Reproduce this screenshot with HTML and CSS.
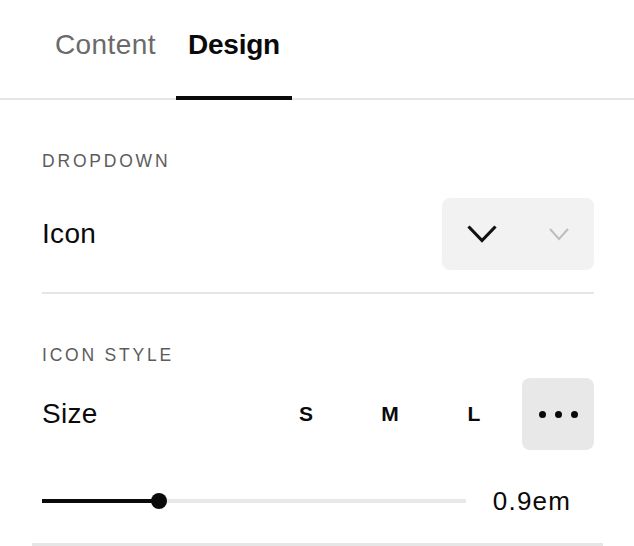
FILE: index.html
```html
<!DOCTYPE html>
<html>
<head>
<meta charset="utf-8">
<link rel="stylesheet" href="styles.css">
</head>
<body>
<div class="panel">
  <div class="tabs">
    <div class="tab">Content</div>
    <div class="tab active">Design</div>
  </div>
  <div class="body">
    <div class="label label-first">DROPDOWN</div>
    <div class="row row-dropdown">
      <div class="row-title">Icon</div>
      <div class="picker">
        <div class="picker-cell">
          <svg width="30" height="18" viewBox="0 0 30 18"><polyline points="1.5,1.5 15,15.5 28.5,1.5" fill="none" stroke="#111" stroke-width="3.2"/></svg>
        </div>
        <div class="picker-cell picker-cell-alt">
          <svg width="20" height="13" viewBox="0 0 20 13"><polyline points="1,1 10,11 19,1" fill="none" stroke="#bdbdbd" stroke-width="2"/></svg>
        </div>
      </div>
    </div>
    <div class="divider"></div>
    <div class="label label-second">ICON STYLE</div>
    <div class="row row-size">
      <div class="row-title">Size</div>
      <div class="sizes">
        <div class="size-btn">S</div>
        <div class="size-btn">M</div>
        <div class="size-btn">L</div>
        <div class="size-btn selected">
          <span class="dot"></span><span class="dot"></span><span class="dot"></span>
        </div>
      </div>
    </div>
    <div class="slider-row">
      <div class="track">
        <div class="fill" style="width: 117px"></div>
        <div class="knob" style="left: 117px"></div>
      </div>
      <div class="value">0.9em</div>
    </div>
    <div class="divider divider-wide"></div>
  </div>
</div>
</body>
</html>
```
FILE: styles.css
```css
html, body {
  margin: 0;
  padding: 0;
  background: #fff;
}
body {
  font-family: "Liberation Sans", Arial, sans-serif;
  color: #0a0a0a;
  width: 634px;
  height: 546px;
  overflow: hidden;
}
.tabs {
  display: flex;
  gap: 8px;
  height: 100px;
  box-sizing: border-box;
  padding-left: 43px;
  border-bottom: 2px solid #e6e6e6;
}
.tab {
  font-size: 28px;
  line-height: 32px;
  padding: 29px 12px 0;
  margin-bottom: -2px;
  border-bottom: 4px solid transparent;
  color: #6a6a6a;
  letter-spacing: 0.4px;
}
.tab.active {
  color: #0a0a0a;
  font-weight: bold;
  border-bottom-color: #0a0a0a;
  letter-spacing: -0.2px;
}
.body {
  padding: 0 40px 0 42px;
}
.label {
  font-size: 17.5px;
  line-height: 20px;
  letter-spacing: 2.8px;
  color: #5c5c5c;
}
.label-first {
  margin-top: 51px;
}
.label-second {
  margin-top: 51px;
}
.row {
  display: flex;
  align-items: center;
  height: 72px;
}
.row-dropdown {
  margin-top: 27px;
}
.row-size {
  margin-top: 13px;
}
.row-title {
  flex: 1;
  font-size: 28px;
  line-height: 32px;
  letter-spacing: 0.3px;
}
.picker {
  width: 152px;
  height: 72px;
  box-sizing: border-box;
  padding-left: 4px;
  background: #f1f2f1;
  border-radius: 8px;
  display: flex;
}
.picker-cell {
  flex: 1;
  display: flex;
  align-items: center;
  justify-content: center;
}
.picker-cell-alt {
  padding-left: 6px;
}
.picker-cell svg {
  display: block;
}
.divider {
  height: 2px;
  background: #e6e6e6;
  margin-top: 22px;
}
.sizes {
  display: flex;
  gap: 12px;
}
.size-btn {
  width: 72px;
  height: 72px;
  border-radius: 8px;
  display: flex;
  align-items: center;
  justify-content: center;
  gap: 9px;
  font-size: 21px;
  font-weight: bold;
}
.size-btn.selected {
  background: #e8e8e8;
}
.dot {
  width: 7px;
  height: 7px;
  border-radius: 50%;
  background: #0a0a0a;
}
.slider-row {
  display: flex;
  align-items: center;
  height: 32px;
  margin-top: 35px;
}
.track {
  position: relative;
  flex: 1;
  height: 4px;
  background: #e8e8e8;
}
.fill {
  height: 4px;
  background: #0a0a0a;
}
.knob {
  position: absolute;
  top: -6px;
  width: 16px;
  height: 16px;
  margin-left: -8px;
  border-radius: 50%;
  background: #0a0a0a;
}
.value {
  width: 128px;
  text-align: center;
  padding-left: 4px;
  box-sizing: border-box;
  font-size: 26px;
  line-height: 32px;
  letter-spacing: 1.2px;
}
.divider-wide {
  height: 3px;
  margin: 26px -9px 0 -10px;
}
```
